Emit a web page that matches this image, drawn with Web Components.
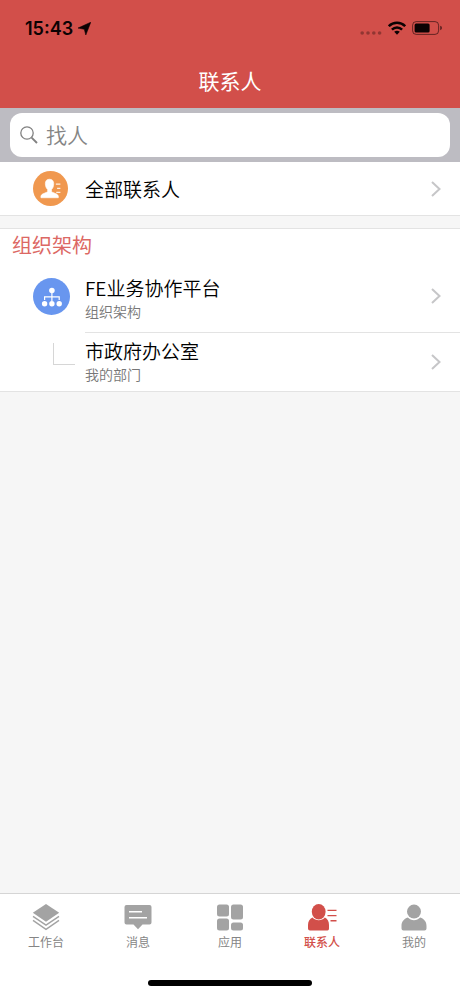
<!DOCTYPE html>
<html lang="zh-CN">
<head>
<meta charset="utf-8">
<meta name="viewport" content="width=device-width, initial-scale=1">
<title>联系人</title>
<style>
  html, body { margin: 0; height: 100%; }
  body {
    font-family: "Noto Sans CJK SC", sans-serif;
    color: #000;
    --brand: #d24f4a;
    --line: #e3e3e3;
    --muted: #777;
  }
  contacts-app { height: 100%; }
</style>
</head>
<body>
<contacts-app></contacts-app>

<script>
const define = (name, html, setup) => {
  const template = document.createElement('template');
  template.innerHTML = html;
  customElements.define(name, class extends HTMLElement {
    constructor() {
      super();
      this.attachShadow({ mode: 'open' }).append(template.content.cloneNode(true));
    }
    connectedCallback() { if (setup) setup(this, this.shadowRoot); }
  });
};

define('status-bar', `
<style>
  :host { display: flex; align-items: center; justify-content: space-between; height: 56px; padding: 0 18px 0 25px; color: #0b0203; }
  div { display: flex; align-items: center; }
  time { font: 600 18px/24px Inter, sans-serif; padding-top: 2px; }
  .left { gap: 5px; }
  .right { gap: 6px; }
  svg { display: block; }
</style>
<div class="left">
  <time>15:43</time>
  <svg width="13" height="13" viewBox="0 0 12 12" aria-hidden="true"><path d="M11.800.2 7.200 12 5.800 6.700 0 5.600Z" fill="currentColor" stroke="currentColor" stroke-width=".5" stroke-linejoin="round"/></svg>
</div>
<div class="right">
  <svg width="22" height="14" viewBox="0 0 22 14" aria-hidden="true"><g fill="#0b0203" opacity=".32"><circle cx="2.200" cy="12" r="1.800"/><circle cx="8" cy="12" r="1.800"/><circle cx="13.800" cy="12" r="1.800"/><circle cx="19.600" cy="12" r="1.800"/></g></svg>
  <svg width="18" height="14" viewBox="0 0 18 14" aria-hidden="true"><g fill="none" stroke="currentColor" stroke-width="2.500"><path d="M.8 5.200C5.300.6 12.700.6 17.200 5.200"/><path d="M3.900 8.600C6.800 5.700 11.200 5.700 14.100 8.600"/></g><path d="M6.200 10.800Q9 8.600 11.800 10.800L9 13.800Z" fill="currentColor"/></svg>
  <svg width="30" height="14" viewBox="0 0 30 14" aria-hidden="true"><rect x=".6" y=".6" width="26" height="12.800" rx="3.600" fill="none" stroke="currentColor" opacity=".55"/><rect x="2.600" y="2.500" width="15" height="9" rx="1.500" fill="currentColor"/><path d="M28.200 4.800Q30 5.400 30 7T28.200 9.200Z" fill="currentColor" opacity=".6"/></svg>
</div>`);

define('app-header', `
<style>
  :host { display: block; background: var(--brand); }
  h1 { margin: 0; padding: 8px 0 12px; font-size: 21px; line-height: 32px; font-weight: 400; text-align: center; color: #fff; }
</style>
<status-bar></status-bar>
<h1><slot></slot></h1>`);

define('search-box', `
<style>
  :host { display: block; background: #bdbcc2; padding: 5px 10px; }
  label { display: flex; align-items: center; gap: 8px; height: 44px; padding: 0 10px; background: #fff; border-radius: 12px; }
  svg { flex: none; color: #818181; }
  input { flex: 1; min-width: 0; height: 40px; padding: 0 0 2px; border: 0; outline: 0; background: none; font: inherit; font-size: 21px; font-weight: 350; color: #222; }
  input::placeholder { color: #858585; opacity: 1; }
</style>
<label>
  <svg width="18" height="18" viewBox="0 0 18 18" fill="none" stroke="currentColor" aria-hidden="true"><circle cx="7" cy="7" r="6.200" stroke-width="1.300"/><path d="M11.600 11.600 17 17" stroke-width="1.900"/></svg>
  <input type="search" aria-label="找人" placeholder="找人">
</label>`);

define('contact-icon', `
<style>:host { display: block; } svg { display: block; }</style>
<svg width="35" height="35" viewBox="0 0 34 34" aria-hidden="true">
  <circle cx="17" cy="17" r="17" fill="#f0984f"/>
  <path d="M16 8C13.200 8 11.900 9.800 12 12.300 12.100 14.900 12.900 16.900 14.200 18V20.200C12.500 21.400 8.400 21.900 7.700 24.200V26H24.600V24.200C23.900 21.900 19.700 21.400 18 20.200V18C19.300 16.900 20 14.900 20.100 12.300 20.200 9.800 18.800 8 16 8Z" fill="#fff" stroke="#fff" stroke-width=".6"/>
  <path d="M22.200 12.800H26.600M23.400 16.800H26.600M22.600 20.800H26.600" stroke="#fff" stroke-width="1.200" opacity=".85"/>
</svg>`);

define('org-icon', `
<style>:host { display: block; } svg { display: block; }</style>
<svg width="37" height="37" viewBox="0 0 37 37" aria-hidden="true">
  <circle cx="18.500" cy="18.500" r="18.500" fill="#6896ef"/>
  <g fill="#fff"><circle cx="18.900" cy="12.500" r="2.800"/><circle cx="11.600" cy="25.700" r="2.700"/><circle cx="18.900" cy="25.700" r="2.700"/><circle cx="26.200" cy="25.700" r="2.700"/></g>
  <path d="M18.900 14V23M11.600 22V18.800H26.200V22" fill="none" stroke="#fff" stroke-width="1.200"/>
</svg>`);

define('branch-icon', `
<style>:host { display: block; width: 21px; height: 21px; margin: -16px 0 0 20px; border: solid #d6d6d6; border-width: 0 0 1px 1px; }</style>`);

define('list-row', `
<style>
  :host { display: block; }
  a { display: flex; align-items: stretch; height: 100%; color: inherit; text-decoration: none; }
  .icon { flex: none; box-sizing: border-box; width: 85px; padding-left: 33px; display: flex; align-items: center; }
  .body { flex: 1; min-width: 0; display: flex; align-items: center; justify-content: space-between; padding-right: 19px; }
  :host([divided]) .body { border-bottom: 1px solid var(--line); }
  :host([divided]) .text { padding-top: 6px; }
  .title { display: block; font-size: 19px; line-height: 24px; font-weight: 350; }
  small { display: block; font-size: 14px; line-height: 22px; font-weight: 350; color: var(--muted); }
  small:empty { display: none; }
  svg { flex: none; }
</style>
<a href="#">
  <span class="icon"><slot name="icon"></slot></span>
  <span class="body">
    <span class="text"><span class="title"><slot></slot></span><small></small></span>
    <svg width="10" height="16" viewBox="0 0 10 16" aria-hidden="true"><path d="M1 1 8.500 8 1 15" fill="none" stroke="#c6c6c8" stroke-width="2"/></svg>
  </span>
</a>`, (host, root) => { root.querySelector('small').textContent = host.getAttribute('note') || ''; });

define('list-section', `
<style>
  :host { display: block; background: #fff; border-bottom: 1px solid var(--line); }
  :host([heading]) { border-top: 1px solid var(--line); }
  h2 { margin: 0; padding: 2px 12px 1px; font-size: 20px; line-height: 28px; font-weight: 400; color: #dc6864; }
  h2:empty { display: none; }
</style>
<h2></h2><slot></slot>`, (host, root) => { root.querySelector('h2').textContent = host.getAttribute('heading') || ''; });

define('tab-item', `
<style>
  :host { flex: 1; display: block; color: #a3a3a3; --label: #858585; }
  :host([active]) { color: var(--brand); --label: var(--brand); }
  a { display: flex; flex-direction: column; align-items: center; gap: 2px; color: inherit; text-decoration: none; }
  span { font-size: 12px; line-height: 18px; color: var(--label); }
  :host([active]) span { font-weight: 500; }
  ::slotted(svg) { display: block; }
</style>
<a href="#"><slot name="icon"></slot><span><slot></slot></span></a>`);

define('tab-bar', `
<style>
  :host { display: block; background: #fff; border-top: 1px solid #d5d5d5; }
  nav { display: flex; padding: 9px 0 29px; }
  .home { width: 164px; height: 6px; margin: 0 auto 10px; border-radius: 3px; background: #000; }
</style>
<nav aria-label="主导航"><slot></slot></nav>
<div class="home"></div>`);

define('contacts-app', `
<style>
  :host { display: flex; flex-direction: column; min-height: 100%; background: #f6f6f6; }
  main { flex: 1; }
  .single { height: 53px; }
  .root { height: 73px; }
  .child { height: 58px; }
  .org { margin-top: 12px; }
</style>
<app-header>联系人</app-header>
<search-box></search-box>
<main>
  <list-section>
    <list-row class="single"><contact-icon slot="icon"></contact-icon>全部联系人</list-row>
  </list-section>
  <list-section class="org" heading="组织架构">
    <list-row class="root" divided note="组织架构"><org-icon slot="icon"></org-icon>FE业务协作平台</list-row>
    <list-row class="child" note="我的部门"><branch-icon slot="icon"></branch-icon>市政府办公室</list-row>
  </list-section>
</main>
<tab-bar>
  <tab-item>
    <svg slot="icon" width="28" height="28" viewBox="0 0 28 28" aria-hidden="true"><path d="M14 1 27.200 9.800 14 18.800.8 9.800Z" fill="currentColor"/><path d="M1 13.300 14 22.200 27 13.300M1 17.300 14 26.300 27 17.300" fill="none" stroke="currentColor" stroke-width="1.400"/></svg>工作台
  </tab-item>
  <tab-item>
    <svg slot="icon" width="28" height="28" viewBox="0 0 28 28" aria-hidden="true"><path d="M2.500 2H25.500Q27.500 2 27.500 4V19.500Q27.500 21.500 25.500 21.500H18.500L14 26.300 9.500 21.500H2.500Q.5 21.500.5 19.500V4Q.5 2 2.500 2Z" fill="currentColor"/><path d="M5 8.700H18M5 14.800H23" stroke="#fff" stroke-width="1.400"/></svg>消息
  </tab-item>
  <tab-item>
    <svg slot="icon" width="28" height="28" viewBox="0 0 28 28" fill="currentColor" aria-hidden="true"><rect x="1" y="1.500" width="12" height="12" rx="2.500"/><rect x="1" y="15.500" width="12" height="12" rx="2.500"/><rect x="15" y="1.500" width="12" height="15" rx="2.500"/><rect x="15" y="19.500" width="12" height="8" rx="2.500"/></svg>应用
  </tab-item>
  <tab-item active>
    <svg slot="icon" width="30" height="28" viewBox="0 0 30 28" aria-hidden="true"><ellipse cx="11.700" cy="8.700" rx="6.900" ry="7.700" fill="currentColor"/><path d="M5.500 14.600C2.500 15.900 1 18.500 1 22V25.500Q1 27.500 3 27.500H20.500Q22 27.500 22 25.500V22C22 18.500 20.700 15.900 17.900 14.600 14.800 18.200 8.700 18.200 5.500 14.600Z" fill="currentColor"/><path d="M20.500 7.400H29.500M20.500 12.600H29.500M23.500 17.800H29.500" stroke="currentColor" stroke-width="1.400"/></svg>联系人
  </tab-item>
  <tab-item>
    <svg slot="icon" width="28" height="28" viewBox="0 0 28 28" fill="currentColor" aria-hidden="true"><circle cx="14" cy="8.600" r="7"/><path d="M7.800 14.600C3.800 16 1.500 19 1.500 23V25.500Q1.500 27.500 3.500 27.500H24.500Q26.500 27.500 26.500 25.500V23C26.500 19 24.200 16 20.200 14.600 17 18 11 18 7.800 14.600Z"/></svg>我的
  </tab-item>
</tab-bar>`);
</script>
</body>
</html>
